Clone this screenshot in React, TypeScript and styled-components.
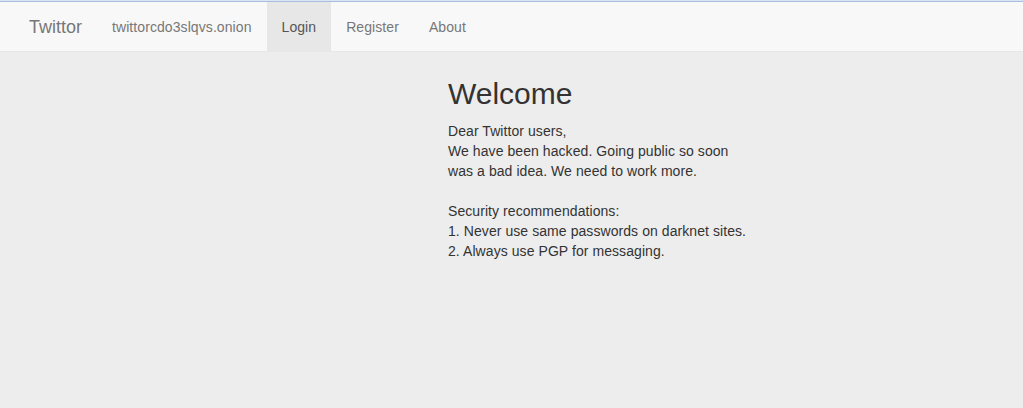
import React from 'react';
import styled, {createGlobalStyle} from 'styled-components';

const GlobalStyle = createGlobalStyle`
  html, body {
    margin: 0;
    padding: 0;
    background: #ededed;
  }
  body {
    font-family: 'Liberation Sans', Arial, sans-serif;
    font-size: 14px;
    line-height: 20px;
    color: #333;
  }
`;

const links = ['twittorcdo3slqvs.onion', 'Login', 'Register', 'About'];

const App: React.FC = () => {
  return (
    <>
      <GlobalStyle />
      <TopLine />
      <Navbar>
        <Brand href="#">Twittor</Brand>
        {links.map((l) => (
          <NavLink key={l} href="#" $active={l === 'Login'}>{l}</NavLink>
        ))}
      </Navbar>
      <Main>
        <Content>
          <Title>Welcome</Title>
          <Text>
            Dear Twittor users,<br />
            We have been hacked. Going public so soon<br />
            was a bad idea. We need to work more.<br />
            <br />
            Security recommendations:<br />
            1. Never use same passwords on darknet sites.<br />
            2. Always use PGP for messaging.
          </Text>
        </Content>
      </Main>
    </>
  );
};

export default App;

const TopLine = styled.div`
  height: 2px;
  background: linear-gradient(to bottom, #dce5f2 0, #dce5f2 1px, #a9bee2 1px, #a9bee2 2px);
`;

const Navbar = styled.nav`
  display: flex;
  align-items: stretch;
  height: 49px;
  padding-left: 14px;
  background: #f8f8f8;
  border-bottom: 1px solid #e7e7e7;
`;

const Brand = styled.a`
  display: block;
  padding: 15px 15px 14px;
  font-size: 18px;
  line-height: 20px;
  color: #777;
  text-decoration: none;
`;

const NavLink = styled.a<{$active?: boolean}>`
  display: block;
  padding: 15px 15px 14px;
  font-size: 14px;
  line-height: 20px;
  letter-spacing: 0.08px;
  text-decoration: none;
  color: ${(p) => (p.$active ? '#555' : '#777')};
  background: ${(p) => (p.$active ? '#e7e7e7' : 'transparent')};
`;

const Main = styled.main`
  display: grid;
  grid-template-columns: 448px 1fr;
  padding-top: 25px;
`;

const Content = styled.section`
  grid-column: 2;
`;

const Title = styled.h1`
  margin: 0 0 11px;
  font-size: 30px;
  font-weight: 500;
  line-height: 33px;
  color: #333;
`;

const Text = styled.p`
  margin: 0;
  font-size: 14px;
  line-height: 20px;
  letter-spacing: 0.07px;
`;
